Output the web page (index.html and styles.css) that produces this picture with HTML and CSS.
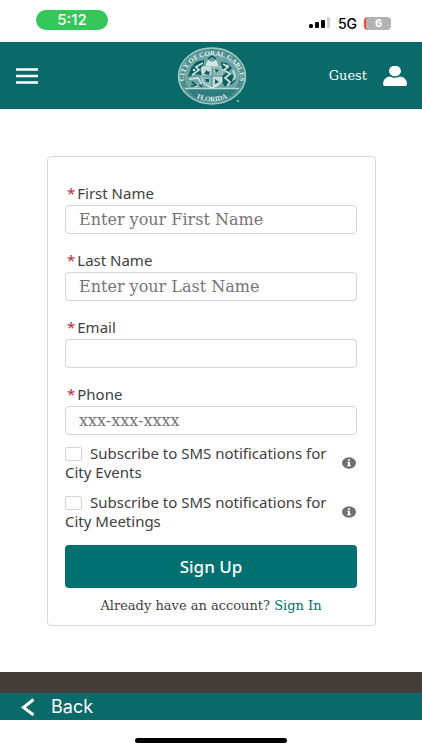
FILE: index.html
```html
<!DOCTYPE html>
<html lang="en">
<head>
    <meta charset="utf-8">
    <meta name="viewport" content="width=device-width, initial-scale=1">
    <title>Sign Up</title>
    <link rel="stylesheet" href="styles.css">
</head>
<body>
    <div class="status-bar">
        <span class="clock">5:12</span>
        <div class="status-right">
            <svg class="signal" width="22" height="12" viewBox="0 0 22 12" aria-hidden="true">
                <rect x="0" y="7" width="4" height="4" rx="1.5"/>
                <rect x="6" y="5" width="4" height="6" rx="1"/>
                <rect x="12" y="3" width="4" height="8" rx="1"/>
                <rect x="18" y="0" width="3" height="11" rx="1" fill="#d0d0d0"/>
            </svg>
            <span class="network">5G</span>
            <span class="battery">6</span>
        </div>
    </div>

    <header class="header">
        <button class="icon-btn" type="button" aria-label="Menu">
            <svg width="22" height="16" viewBox="0 0 22 16"><path d="M0 1.5h22M0 8h22M0 14.5h22" stroke="#fff" stroke-width="2.4"/></svg>
        </button>
        <svg class="seal" width="70" height="60" viewBox="0 0 70 60" role="img" aria-label="City of Coral Gables, Florida">
            <defs>
                <path id="arc-top" d="M9 41A28 23 0 1 1 61 41"/>
                <path id="arc-bottom" d="M15 49.500Q35 61.500 55 49.500"/>
            </defs>
            <ellipse cx="35" cy="30" rx="33.500" ry="28" fill="#4d908f" stroke="#a3cac8" stroke-width="1.500"/>
            <ellipse cx="35" cy="30" rx="26.500" ry="21.500" fill="#6aa3a2" stroke="#8fbebc" stroke-width=".8"/>
            <text class="seal-text"><textPath href="#arc-top" startOffset="50%" text-anchor="middle">CITY OF CORAL GABLES</textPath></text>
            <path d="M10 43h50l-6 7q-19 10-38 0z" fill="#2e7d7e"/>
            <path d="M8 42.500h54" stroke="#bddad8" stroke-width="1.500"/>
            <text class="seal-text"><textPath href="#arc-bottom" startOffset="50%" text-anchor="middle">FLORIDA</textPath></text>
            <path d="M25 21h20v12q0 6-10 9-10-3-10-9z" fill="#c0dad8" stroke="#e0eeed" stroke-width="1"/>
            <path d="M35 21h10v9H35zM25 30h10v11q-10-3-10-9z" fill="#8cb9b7"/>
            <path d="M35 21v20M25 30h20" stroke="#4d8e8d" stroke-width="1"/>
            <path d="M27 28l2.500-4 1.500 2 2-1-1 4zM38 33l4 3-4 2zM38 23l4 1-3 3zM28 33h4v3h-3z" fill="#125b5e"/>
            <path d="M29 18l2-4 4 2 4-2 2 4v2H29z" fill="#d2e6e5"/>
            <path d="M31 13l4-3 4 3" fill="none" stroke="#0c5558" stroke-width="1.500"/>
            <path d="M27 14l-8 2-5 6-3 9 7-3 7 1-2-6 4-5z" fill="#0d5b5e"/>
            <path d="M44 16l6 1 5 5-4 4 6 4-3 8-7 2-2-10 4-3-4-5z" fill="#0d5b5e"/>
            <path d="M26 17l-7 4 3 3-7 5M12 33l9-1 3 5-6 4M46 18l5 3-4 3 6 4-5 4 5 4-3 4M56 24l2 6-2 5" fill="none" stroke="#c5dedc" stroke-width="1.800"/>
            <path d="M15 36l4 3-5 1M22 38l3 3M46 36l3 4M54 38l4-4" fill="none" stroke="#0d5b5e" stroke-width="1.600"/>
            <circle cx="17" cy="24" r="1.300" fill="#d1e6e5"/>
            <circle cx="50" cy="20" r="1.500" fill="#d1e6e5"/>
            <circle cx="61" cy="55" r=".9" fill="#b9dad8"/>
        </svg>
        <a class="guest" href="#">
            <span>Guest</span>
            <svg width="24" height="20" viewBox="0 0 24 20" aria-hidden="true">
                <ellipse cx="12" cy="5" rx="6" ry="5.300" fill="#fff"/>
                <path d="M0 18q0-6.500 7-7.500 5 2.500 10 0 7 1 7 7.500 0 2-2 2H2q-2 0-2-2z" fill="#fff"/>
            </svg>
        </a>
    </header>

    <main class="main">
        <form class="card">
            <div class="field">
                <label for="first-name"><span class="required">*</span>First Name</label>
                <input type="text" id="first-name" placeholder="Enter your First Name" required>
            </div>
            <div class="field">
                <label for="last-name"><span class="required">*</span>Last Name</label>
                <input type="text" id="last-name" placeholder="Enter your Last Name" required>
            </div>
            <div class="field">
                <label for="email"><span class="required">*</span>Email</label>
                <input type="email" id="email" required>
            </div>
            <div class="field">
                <label for="phone"><span class="required">*</span>Phone</label>
                <input type="tel" id="phone" placeholder="xxx-xxx-xxxx" required>
            </div>

            <div class="consent">
                <label for="sms-events"><input type="checkbox" id="sms-events">Subscribe to SMS notifications for City Events</label>
                <button class="icon-btn" type="button" aria-label="About City Events messages">
                    <svg width="14" height="12" viewBox="0 0 14 12"><ellipse cx="7" cy="6" rx="7" ry="5.800" fill="#6e6e6e"/><path d="M6 2.200h2v1.600H6zM5.200 4.800H8v3.200h.8v1.200H5.200V8H6V6h-.8z" fill="#fff"/></svg>
                </button>
            </div>
            <div class="consent">
                <label for="sms-meetings"><input type="checkbox" id="sms-meetings">Subscribe to SMS notifications for City Meetings</label>
                <button class="icon-btn" type="button" aria-label="About City Meetings messages">
                    <svg width="14" height="12" viewBox="0 0 14 12"><ellipse cx="7" cy="6" rx="7" ry="5.800" fill="#6e6e6e"/><path d="M6 2.200h2v1.600H6zM5.200 4.800H8v3.200h.8v1.200H5.200V8H6V6h-.8z" fill="#fff"/></svg>
                </button>
            </div>

            <button class="submit" type="submit">Sign Up</button>
            <p class="signin">Already have an account? <a href="#">Sign In</a></p>
        </form>
    </main>

    <footer>
        <div class="footer-strip"></div>
        <nav class="back-bar">
            <a href="#">
                <svg width="14" height="18" viewBox="0 0 14 18" aria-hidden="true"><path d="M12.500 1.500L2.500 9.500l10 7.500" fill="none" stroke="#fff" stroke-width="3"/></svg>
                <span>Back</span>
            </a>
        </nav>
        <div class="home-area"><div class="home-indicator"></div></div>
    </footer>
</body>
</html>
```
FILE: styles.css
```css
* { box-sizing: border-box; }
body { margin: 0; min-height: 100vh; display: flex; flex-direction: column; background: #fff; color: #404040; font-family: "Noto Sans", "Open Sans", sans-serif; font-size: 15px; }
a { text-decoration: none; }
svg { display: block; }
.icon-btn { padding: 0; border: none; background: none; cursor: pointer; }

/* phone status bar */
.status-bar { height: 42px; padding: 10px 31px 0 36px; display: flex; justify-content: space-between; align-items: flex-start; font-family: Inter, sans-serif; }
.clock { width: 72px; height: 20px; border-radius: 10px; background: #34c759; color: #fff; font-size: 15px; font-weight: 500; line-height: 20px; text-align: center; }
.status-right { height: 26px; display: flex; align-items: center; gap: 7px; color: #000; }
.network { font-size: 14px; font-weight: 500; }
.battery { width: 27px; height: 13px; border-left: 2px solid #f0483e; border-radius: 4px; background: #b3b3b3; color: #fff; font-size: 11px; font-weight: 700; line-height: 13px; text-align: center; }

/* header */
.header { height: 67px; padding: 0 15px 0 16px; display: grid; grid-template-columns: 1fr auto 1fr; align-items: center; background: #0a6969; }
.header .icon-btn { justify-self: start; }
.seal-text { fill: #e2f0ef; font-family: "Liberation Serif", serif; font-size: 7px; font-weight: 700; }
.guest { justify-self: end; display: flex; align-items: center; gap: 16px; color: #fff; font-family: "DejaVu Serif", serif; font-size: 13px; }

/* form */
.main { flex: 1; padding: 47px 46px 44px 47px; }
.card { padding: 26px 18px 9px 17px; border: 1px solid #d9d9d9; border-radius: 4px; }
.field { margin-bottom: 16px; }
.field label { display: block; padding-left: 2px; margin-bottom: 2px; line-height: 20px; }
.required { margin-right: 2px; color: #c8233f; }
.field input { display: block; width: 100%; height: 29px; padding: 0 13px; border: 1px solid #d4d4d4; border-radius: 4px; background: #fff; color: #404040; font-family: "DejaVu Serif", serif; font-size: 16px; }
.field input::placeholder { color: #757575; opacity: 1; }
.field:nth-of-type(4) { margin-bottom: 9px; }
.consent { display: flex; justify-content: space-between; align-items: center; gap: 8px; margin-bottom: 11px; line-height: 19px; }
.consent input { appearance: none; width: 17px; height: 14px; margin: 0 8px 0 0; border: 1px solid #d4d4d4; border-radius: 2px; background: #fff; vertical-align: -2px; }
.consent input:checked { background: #007070; }
.consent .icon-btn { margin-right: 1px; }
.submit { display: block; width: 100%; height: 43px; margin-top: 14px; border: none; border-radius: 4px; background: #007070; color: #fff; font-family: "Noto Sans", sans-serif; font-size: 17px; font-weight: 500; cursor: pointer; }
.signin { margin: 8px 0 0; font-family: "DejaVu Serif", serif; font-size: 13px; line-height: 20px; text-align: center; }
.signin a { color: #007070; }

/* bottom bars */
.footer-strip { height: 21px; background: #423d38; }
.back-bar { height: 27px; padding-left: 21px; background: #0a6969; }
.back-bar a { height: 100%; display: inline-flex; align-items: center; gap: 16px; color: #fff; font-family: Inter, sans-serif; font-size: 18px; }
.home-area { height: 30px; padding-top: 18px; }
.home-indicator { width: 36%; height: 5px; margin: 0 auto; border-radius: 3px; background: #000; }
```
